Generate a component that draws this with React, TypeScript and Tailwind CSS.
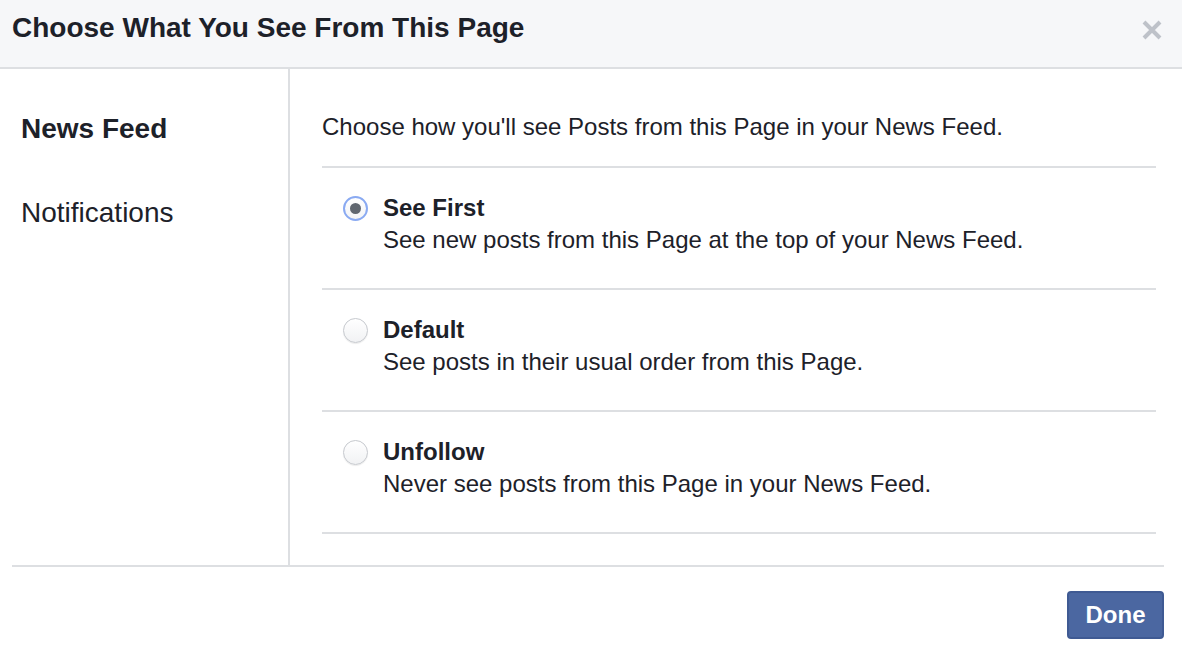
import React from "react";

const options = [
  { title: "See First", desc: "See new posts from this Page at the top of your News Feed.", selected: true },
  { title: "Default", desc: "See posts in their usual order from this Page.", selected: false },
  { title: "Unfollow", desc: "Never see posts from this Page in your News Feed.", selected: false },
];

function Radio({ selected }: { selected: boolean }) {
  return (
    <div
      className={
        selected
          ? "w-[25px] h-[25px] rounded-full border-[2px] border-[#8aaaf2] bg-gradient-to-b from-white to-[#f3f4f6] flex items-center justify-center"
          : "w-[25px] h-[25px] rounded-full border-[1.5px] border-[#c6c9ce] bg-gradient-to-b from-white to-[#f1f2f4] shadow-[0_1px_1px_rgba(0,0,0,0.08)]"
      }
    >
      {selected && <div className="w-[11px] h-[11px] rounded-full bg-[#606770]" />}
    </div>
  );
}

export default function App() {
  return (
    <div
      className="w-[1182px] h-[660px] bg-white text-[#1d2129] flex flex-col"
      style={{ fontFamily: '"Liberation Sans", Arial, Helvetica, sans-serif' }}
    >
      <div className="h-[69px] bg-[#f6f7f9] border-b-2 border-[#dddfe2] flex items-start justify-between pl-[12px] pr-[20px] pt-[12px] shrink-0">
        <h1 className="text-[28px] leading-[32px] font-bold">Choose What You See From This Page</h1>
        <svg width="20" height="20" viewBox="0 0 20 20" className="mt-[8px]">
          <path d="M2 2 L18 18 M18 2 L2 18" stroke="#bec2c9" strokeWidth="4" strokeLinecap="butt" />
        </svg>
      </div>

      <div className="flex">
        <div className="w-[290px] shrink-0 border-r-2 border-[#dddfe2] pt-[44px] pl-[21px] flex flex-col gap-[52px]">
          <div className="text-[28px] leading-[32px] font-bold">News Feed</div>
          <div className="text-[28px] leading-[32px]">Notifications</div>
        </div>
        <div className="flex-1 pl-[32px] pr-[26px] pt-[42px] pb-[31px]">
          <div className="text-[24px] leading-[32px] pb-[23px] border-b-2 border-[#dddfe2]">
            Choose how you'll see Posts from this Page in your News Feed.
          </div>
          {options.map((o) => (
            <div key={o.title} className="flex border-b-2 border-[#dddfe2] pt-[24px] pb-[32px] pl-[21px]">
              <div className="w-[40px] shrink-0 pt-[4px]">
                <Radio selected={o.selected} />
              </div>
              <div>
                <div className="text-[24px] leading-[32px] font-bold">{o.title}</div>
                <div className="text-[24px] leading-[32px]">{o.desc}</div>
              </div>
            </div>
          ))}
        </div>
      </div>

      <div className="ml-[12px] mr-[18px] border-t-2 border-[#dddfe2] pt-[24px] flex justify-end">
        <button className="w-[97px] h-[48px] rounded-[4px] bg-[#4b67a1] border-2 border-[#3f5a93] text-white text-[24px] font-bold leading-none flex items-center justify-center">
          Done
        </button>
      </div>
    </div>
  );
}
